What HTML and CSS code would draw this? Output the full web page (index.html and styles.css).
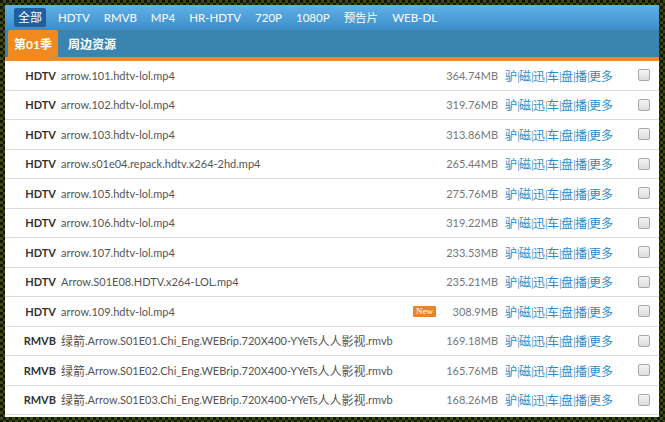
FILE: index.html
```html
<!DOCTYPE html>
<html lang="zh-CN">
<head>
<meta charset="utf-8">
<title>Arrow</title>
<link rel="stylesheet" href="styles.css">
</head>
<body>
<div class="frame">
  <div class="panel">
    <div class="nav1">
      <span class="n1 active">全部</span>
      <span class="n1">HDTV</span>
      <span class="n1">RMVB</span>
      <span class="n1">MP4</span>
      <span class="n1">HR-HDTV</span>
      <span class="n1">720P</span>
      <span class="n1">1080P</span>
      <span class="n1">预告片</span>
      <span class="n1">WEB-DL</span>
    </div>
    <div class="nav2">
      <span class="n2 active">第01季</span>
      <span class="n2">周边资源</span>
    </div>
    <div class="list">
      <div class="row"><span class="type">HDTV</span><span class="name">arrow.101.hdtv-lol.mp4</span><span class="size">364.74MB</span><span class="links"><a>驴</a><i>|</i><a>磁</a><i>|</i><a>迅</a><i>|</i><a>车</a><i>|</i><a>盘</a><i>|</i><a>播</a><i>|</i><a>更多</a></span><span class="chk"></span></div>
      <div class="row"><span class="type">HDTV</span><span class="name">arrow.102.hdtv-lol.mp4</span><span class="size">319.76MB</span><span class="links"><a>驴</a><i>|</i><a>磁</a><i>|</i><a>迅</a><i>|</i><a>车</a><i>|</i><a>盘</a><i>|</i><a>播</a><i>|</i><a>更多</a></span><span class="chk"></span></div>
      <div class="row"><span class="type">HDTV</span><span class="name">arrow.103.hdtv-lol.mp4</span><span class="size">313.86MB</span><span class="links"><a>驴</a><i>|</i><a>磁</a><i>|</i><a>迅</a><i>|</i><a>车</a><i>|</i><a>盘</a><i>|</i><a>播</a><i>|</i><a>更多</a></span><span class="chk"></span></div>
      <div class="row"><span class="type">HDTV</span><span class="name">arrow.s01e04.repack.hdtv.x264-2hd.mp4</span><span class="size">265.44MB</span><span class="links"><a>驴</a><i>|</i><a>磁</a><i>|</i><a>迅</a><i>|</i><a>车</a><i>|</i><a>盘</a><i>|</i><a>播</a><i>|</i><a>更多</a></span><span class="chk"></span></div>
      <div class="row"><span class="type">HDTV</span><span class="name">arrow.105.hdtv-lol.mp4</span><span class="size">275.76MB</span><span class="links"><a>驴</a><i>|</i><a>磁</a><i>|</i><a>迅</a><i>|</i><a>车</a><i>|</i><a>盘</a><i>|</i><a>播</a><i>|</i><a>更多</a></span><span class="chk"></span></div>
      <div class="row"><span class="type">HDTV</span><span class="name">arrow.106.hdtv-lol.mp4</span><span class="size">319.22MB</span><span class="links"><a>驴</a><i>|</i><a>磁</a><i>|</i><a>迅</a><i>|</i><a>车</a><i>|</i><a>盘</a><i>|</i><a>播</a><i>|</i><a>更多</a></span><span class="chk"></span></div>
      <div class="row"><span class="type">HDTV</span><span class="name">arrow.107.hdtv-lol.mp4</span><span class="size">233.53MB</span><span class="links"><a>驴</a><i>|</i><a>磁</a><i>|</i><a>迅</a><i>|</i><a>车</a><i>|</i><a>盘</a><i>|</i><a>播</a><i>|</i><a>更多</a></span><span class="chk"></span></div>
      <div class="row"><span class="type">HDTV</span><span class="name">Arrow.S01E08.HDTV.x264-LOL.mp4</span><span class="size">235.21MB</span><span class="links"><a>驴</a><i>|</i><a>磁</a><i>|</i><a>迅</a><i>|</i><a>车</a><i>|</i><a>盘</a><i>|</i><a>播</a><i>|</i><a>更多</a></span><span class="chk"></span></div>
      <div class="row"><span class="type">HDTV</span><span class="name">arrow.109.hdtv-lol.mp4<span class="new">New</span></span><span class="size">308.9MB</span><span class="links"><a>驴</a><i>|</i><a>磁</a><i>|</i><a>迅</a><i>|</i><a>车</a><i>|</i><a>盘</a><i>|</i><a>播</a><i>|</i><a>更多</a></span><span class="chk"></span></div>
      <div class="row"><span class="type">RMVB</span><span class="name"><span class="cn">绿箭</span>.Arrow.S01E01.Chi_Eng.WEBrip.720X400-YYeTs<span class="cn">人人影视</span>.rmvb</span><span class="size">169.18MB</span><span class="links"><a>驴</a><i>|</i><a>磁</a><i>|</i><a>迅</a><i>|</i><a>车</a><i>|</i><a>盘</a><i>|</i><a>播</a><i>|</i><a>更多</a></span><span class="chk"></span></div>
      <div class="row"><span class="type">RMVB</span><span class="name"><span class="cn">绿箭</span>.Arrow.S01E02.Chi_Eng.WEBrip.720X400-YYeTs<span class="cn">人人影视</span>.rmvb</span><span class="size">165.76MB</span><span class="links"><a>驴</a><i>|</i><a>磁</a><i>|</i><a>迅</a><i>|</i><a>车</a><i>|</i><a>盘</a><i>|</i><a>播</a><i>|</i><a>更多</a></span><span class="chk"></span></div>
      <div class="row"><span class="type">RMVB</span><span class="name"><span class="cn">绿箭</span>.Arrow.S01E03.Chi_Eng.WEBrip.720X400-YYeTs<span class="cn">人人影视</span>.rmvb</span><span class="size">168.26MB</span><span class="links"><a>驴</a><i>|</i><a>磁</a><i>|</i><a>迅</a><i>|</i><a>车</a><i>|</i><a>盘</a><i>|</i><a>播</a><i>|</i><a>更多</a></span><span class="chk"></span></div>
    </div>
  </div>
</div>
</body>
</html>
```
FILE: styles.css
```css
html, body {
  margin: 0;
  padding: 0;
}
body {
  width: 665px;
  height: 422px;
  overflow: hidden;
  font-family: Lato, "Noto Sans CJK SC", sans-serif;
}
.frame {
  box-sizing: border-box;
  width: 665px;
  height: 422px;
  padding: 5px 6px 5px 5px;
  background: conic-gradient(#3d4a0e 25%, #141704 0 50%, #3d4a0e 0 75%, #141704 0) 0 0 / 6px 6px;
}
.panel {
  height: 100%;
  box-sizing: border-box;
  padding-bottom: 2px;
  background: #fff;
  display: flex;
  flex-direction: column;
}
.nav1 {
  height: 25px;
  flex: none;
  display: flex;
  align-items: center;
  padding-left: 9px;
  gap: 14px;
  background: linear-gradient(#60b0e8, #3d8dca);
}
.n1 {
  color: #fff;
  font-size: 11.5px;
  line-height: 14px;
}
.n1.active {
  font-size: 12px;
  padding: 3px 4px 2px;
  margin-right: -2px;
  background: #1f5f9f;
  border-radius: 2px;
}
.nav2 {
  height: 27px;
  flex: none;
  display: flex;
  align-items: stretch;
  padding-left: 3px;
  background: #3985b0;
}
.n2 {
  color: #fff;
  font-size: 12px;
  font-weight: bold;
  display: flex;
  align-items: center;
  padding: 0 6px;
  margin-right: 4px;
}
.n2.active {
  background: #f18a1e;
  border-radius: 2px 2px 0 0;
}
.list {
  flex: 1;
  border-top: 4px solid #f08a24;
  display: flex;
  flex-direction: column;
}
.row {
  flex: 1;
  display: flex;
  align-items: center;
  border-bottom: 1px solid #dcdcdc;
  font-size: 11px;
  color: #555;
  padding-right: 9px;
}
.type {
  width: 51px;
  text-align: right;
  font-weight: bold;
  color: #333;
  flex: none;
}
.name {
  flex: 1;
  margin-left: 5px;
  display: flex;
  align-items: center;
  white-space: nowrap;
}
.cn {
  font-size: 12px;
}
.new {
  margin-left: auto;
  background: #e8852c;
  color: #ffe6c4;
  font-family: "Liberation Serif", serif;
  font-weight: bold;
  font-size: 9px;
  line-height: 11px;
  width: 23px;
  text-align: center;
  border-radius: 1px;
}
.size {
  width: 62px;
  flex: none;
  text-align: right;
  color: #777;
}
.links {
  margin-left: 7px;
  width: 108px;
  flex: none;
  font-size: 12px;
  color: #6f9fc2;
  white-space: nowrap;
}
.links a {
  color: #2a8ccc;
}
.links i {
  font-style: normal;
  display: inline-block;
  width: 2px;
  text-align: center;
}
.chk {
  flex: none;
  margin-left: 25px;
  width: 10px;
  height: 10px;
  border: 1px solid #a9a9a9;
  border-radius: 2px;
  background: linear-gradient(#f4f4f4, #dcdcdc);
}
```
